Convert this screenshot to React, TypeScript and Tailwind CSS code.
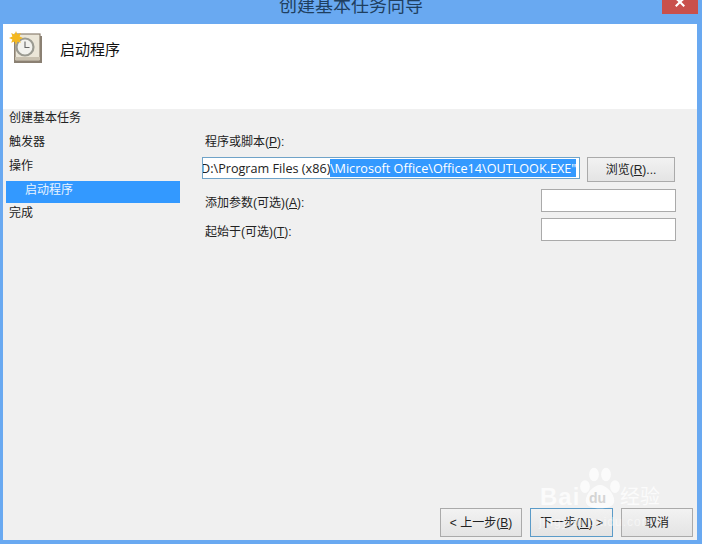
const cjk = 'font-["Liberation_Sans","Noto_Sans_CJK_SC",sans-serif]';

function TaskIcon() {
  return (
    <svg width="34" height="34" viewBox="0 0 34 34" className="shrink-0">
      <rect x="5" y="5" width="28" height="27" fill="#8a8073" />
      <rect x="6" y="3" width="25" height="27" fill="#ebe6d8" stroke="#8d8172" strokeWidth="1.2" />
      <rect x="6" y="26" width="25" height="3" fill="#c9c1b0" />
      <circle cx="16" cy="16" r="8.5" fill="#f2f2ee" stroke="#9b9b92" strokeWidth="2.2" />
      <path d="M16 10.5V16.5H20.5" fill="none" stroke="#666" strokeWidth="1.1" />
      <path
        d="M7 0L8.4 3.4L11.8 2L10.6 5.4L14 7L10.6 8.4L11.8 11.8L8.4 10.6L7 14L5.6 10.6L2.2 11.8L3.4 8.4L0 7L3.4 5.4L2.2 2L5.6 3.4Z"
        fill="#f4b820"
      />
    </svg>
  );
}

function Button({ children, className }: { children: React.ReactNode; className: string }) {
  return (
    <div
      className={`flex items-center justify-center text-[12px] text-[#222] border bg-gradient-to-b from-[#f2f2f2] to-[#e4e4e4] ${className}`}
    >
      {children}
    </div>
  );
}

function Watermark() {
  return (
    <div className="absolute left-[536px] top-[466px] w-[160px] h-[70px] pointer-events-none text-white/75">
      <svg width="42" height="42" viewBox="0 0 56 56" className="absolute left-[43px] top-[1px]" fill="currentColor">
        <ellipse cx="8" cy="26" rx="6.5" ry="8.5" />
        <ellipse cx="20" cy="10" rx="6.5" ry="9" />
        <ellipse cx="36" cy="10" rx="6.5" ry="9" />
        <ellipse cx="48" cy="26" rx="6.5" ry="8.5" />
        <path d="M28 24C20 24 9 35 9 45C9 53 19 55 28 55C37 55 47 53 47 45C47 35 36 24 28 24Z" />
      </svg>
      <span className="absolute left-[4px] top-[18px] font-['Liberation_Sans',sans-serif] font-bold text-[24px] leading-[26px] tracking-[1px]">
        Bai
      </span>
      <span className="absolute left-[53px] top-[25px] font-['Liberation_Sans',sans-serif] font-bold text-[14px] leading-[14px] text-[#d4d4d4]">
        du
      </span>
      <span className={`absolute left-[84px] top-[20px] text-[20px] leading-[22px] ${cjk}`}>经验</span>
      <span className="absolute left-[3px] top-[49px] font-['Liberation_Sans',sans-serif] text-[12px] leading-[14px] tracking-[1px] text-white/50">
        jingyan.baidu.com
      </span>
    </div>
  );
}

export default function App() {
  return (
    <div className={`relative w-[702px] h-[544px] overflow-hidden flex flex-col bg-[#69a9f1] ${cjk}`}>
      {/* Title bar */}
      <div className="h-[24px] shrink-0 relative flex justify-center">
        <span className="text-[18px] leading-[15px] text-[#1f3f5f] -mt-[1px]">创建基本任务向导</span>
        <div className="absolute left-[662px] top-0 w-[36px] h-[14px] bg-[#c9504c] flex items-start justify-center overflow-hidden">
          <svg width="10" height="10" viewBox="0 0 10 10" className="-mt-[3px]">
            <path d="M1.5 0L5 3.5L8.5 0L10 2L6.5 5L10 8.5L8.5 10L5 6.5L1.5 10L0 8.5L3.5 5L0 2Z" fill="#fff" />
          </svg>
        </div>
      </div>

      <div className="flex-1 ml-[3px] mr-[5px] mb-[4px] flex flex-col bg-[#f0f0f0] min-h-0">
        {/* Header */}
        <div className="h-[85px] shrink-0 bg-white flex items-start pl-[6px] pt-[7px]">
          <TaskIcon />
          <span className="ml-[17px] mt-[10px] text-[15px] leading-[18px] text-[#111]">启动程序</span>
        </div>

        <div className="flex-1 flex min-h-0">
          {/* Steps */}
          <div className="w-[177px] shrink-0 flex flex-col text-[12px] text-[#222] -mt-[3px]">
            <div className="h-[24px] pl-[6px] flex items-center">创建基本任务</div>
            <div className="h-[24px] pl-[6px] flex items-center">触发器</div>
            <div className="h-[24px] pl-[6px] flex items-center">操作</div>
            <div className="h-[22px] ml-[3px] mt-[3px] -mb-[2px] pl-[19px] pb-[5px] flex items-center bg-[#3399ff] text-[#e8f4ff]">
              启动程序
            </div>
            <div className="h-[24px] pl-[6px] flex items-center">完成</div>
          </div>

          {/* Form */}
          <div className="flex-1 flex flex-col pl-[25px] pr-[21px] pt-[24px] text-[12px] text-[#222] min-w-0">
            <div className="h-[18px] leading-[18px]">
              程序或脚本(<span className="underline">P</span>):
            </div>
            <div className="flex items-start mt-[6px] -ml-[3px] gap-[7px]">
              <div className="w-[378px] h-[22px] bg-white border border-[#6fa3c8] overflow-hidden flex items-center whitespace-nowrap font-['Open_Sans',sans-serif] text-[12.65px] pl-[1px]">
                <span className="-ml-[3px]">D:\Program Files (x86)</span>
                <span className="bg-[#3399ff] text-white -ml-[0.5px]">\Microsoft Office\Office14\OUTLOOK.EXE"</span>
              </div>
              <Button className="w-[88px] h-[25px] border-[#aaa]">
                浏览(<span className="underline">R</span>)...
              </Button>
            </div>
            <div className="flex items-center justify-between mt-[7px] h-[23px] pt-[5px]">
              <span>
                添加参数(可选)(<span className="underline">A</span>):
              </span>
              <div className="w-[135px] h-[23px] -mt-[5px] bg-white border border-[#aaa]" />
            </div>
            <div className="flex items-center justify-between mt-[6px] h-[23px] pt-[5px]">
              <span>
                起始于(可选)(<span className="underline">T</span>):
              </span>
              <div className="w-[135px] h-[23px] -mt-[5px] bg-white border border-[#aaa]" />
            </div>
          </div>
        </div>

        {/* Footer */}
        <div className="flex justify-end items-center pr-[4px] pb-[3px]">
          <Button className="w-[82px] h-[29px] border-[#aaa]">
            &lt; 上一步(<span className="underline">B</span>)
          </Button>
          <Button className="w-[83px] h-[29px] ml-[8px] border-[#5b9bc8]">
            下一步(<span className="underline">N</span>) &gt;
          </Button>
          <Button className="w-[72px] h-[29px] ml-[8px] border-[#aaa]">取消</Button>
        </div>
      </div>

      <Watermark />
    </div>
  );
}
